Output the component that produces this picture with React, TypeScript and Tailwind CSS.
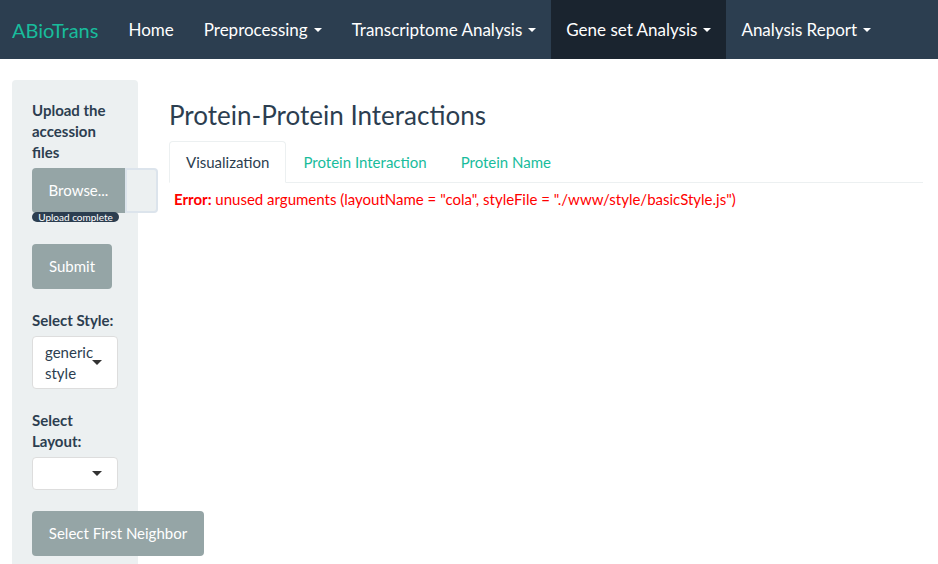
import { useState } from 'react'

const navItems = [
  { label: 'Home', dropdown: false },
  { label: 'Preprocessing', dropdown: true },
  { label: 'Transcriptome Analysis', dropdown: true },
  { label: 'Gene set Analysis', dropdown: true, active: true },
  { label: 'Analysis Report', dropdown: true },
]

const tabs = ['Visualization', 'Protein Interaction', 'Protein Name']

function Caret({ dark }: { dark?: boolean }) {
  return (
    <span
      className={`inline-block ml-[6px] w-0 h-0 border-x-[4px] border-x-transparent border-t-[4px] align-middle ${
        dark ? 'border-t-[#333]' : 'border-t-white'
      }`}
    />
  )
}

export default function App() {
  const [activeTab, setActiveTab] = useState(0)

  return (
    <div className="min-h-[564px] bg-white text-[15px] text-[#2c3e50] font-['Lato','Noto_Sans',sans-serif] overflow-hidden">
      {/* Navbar */}
      <nav className="h-[59px] bg-[#2c3e50] flex items-stretch">
        <div className="pl-[12px] pr-[15px] flex items-center text-[20px] text-[#18bc9c]">ABioTrans</div>
        {navItems.map((item) => (
          <div
            key={item.label}
            className={`px-[15px] flex items-center text-[17px] text-white ${item.active ? 'bg-[#1a242f]' : ''}`}
          >
            {item.label}
            {item.dropdown && <Caret />}
          </div>
        ))}
      </nav>

      <div className="flex items-start pl-[12px] pt-[21px]">
        {/* Sidebar */}
        <div className="w-[126px] shrink-0 bg-[#ecf0f1] rounded-[4px] pl-[20px] pr-[20px] pt-[20px] pb-[20px] min-h-[500px]">
          <div className="font-bold leading-[21px]">Upload the accession files</div>
          <div className="mt-[5px] w-[126px] relative">
            <div className="flex h-[45px]">
              <div className="w-[93px] bg-[#95a5a6] text-white rounded-l-[4px] flex items-center justify-center">
                Browse...
              </div>
              <div className="w-[33px] border-2 border-[#dce4ec] rounded-r-[4px] bg-[#ecf0f1]" />
            </div>
            <div className="absolute left-0 top-[44px] w-[87px] h-[10px] rounded-full bg-[#2c3e50] text-white text-[10px] leading-[10px] text-center">
              Upload complete
            </div>
          </div>

          <button className="mt-[31px] w-[80px] h-[45px] bg-[#95a5a6] text-white rounded-[4px]">Submit</button>

          <div className="mt-[21px] font-bold leading-[21px]">Select Style:</div>
          <div className="mt-[5px] w-[86px] h-[53px] bg-white border border-[#ddd] rounded-[4px] pl-[12px] pr-[20px] pt-[5px] relative leading-[21px]">
            generic style
            <span className="absolute left-[59px] top-[23px] w-0 h-0 border-x-[5px] border-x-transparent border-t-[5px] border-t-[#333]" />
          </div>

          <div className="mt-[21px] font-bold leading-[21px]">Select Layout:</div>
          <div className="mt-[5px] w-[86px] h-[33px] bg-white border border-[#ddd] rounded-[4px] relative">
            <span className="absolute left-[59px] top-[13px] w-0 h-0 border-x-[5px] border-x-transparent border-t-[5px] border-t-[#333]" />
          </div>

          <button className="mt-[21px] w-[172px] h-[45px] bg-[#95a5a6] text-white rounded-[4px] whitespace-nowrap">
            Select First Neighbor
          </button>
        </div>

        {/* Main */}
        <div className="flex-1 pl-[31px] pr-[15px]">
          <h3 className="text-[26px] leading-[31px] mt-[20px] mb-[10px]">Protein-Protein Interactions</h3>
          <div className="flex border-b border-[#ecf0f1] mt-[9px]">
            {tabs.map((t, i) => (
              <div
                key={t}
                onClick={() => setActiveTab(i)}
                className={`px-[16px] h-[42px] flex items-center cursor-pointer -mb-px rounded-t-[4px] ${
                  activeTab === i
                    ? 'border border-[#ecf0f1] border-b-white bg-white text-[#2c3e50]'
                    : 'border border-transparent text-[#18bc9c]'
                }`}
              >
                {t}
              </div>
            ))}
          </div>
          <div className="mt-[6px] pl-[5px] text-[#ff0000] leading-[21px]">
            <span className="font-bold">Error:</span> unused arguments (layoutName = "cola", styleFile =
            "./www/style/basicStyle.js")
          </div>
        </div>
      </div>
    </div>
  )
}
